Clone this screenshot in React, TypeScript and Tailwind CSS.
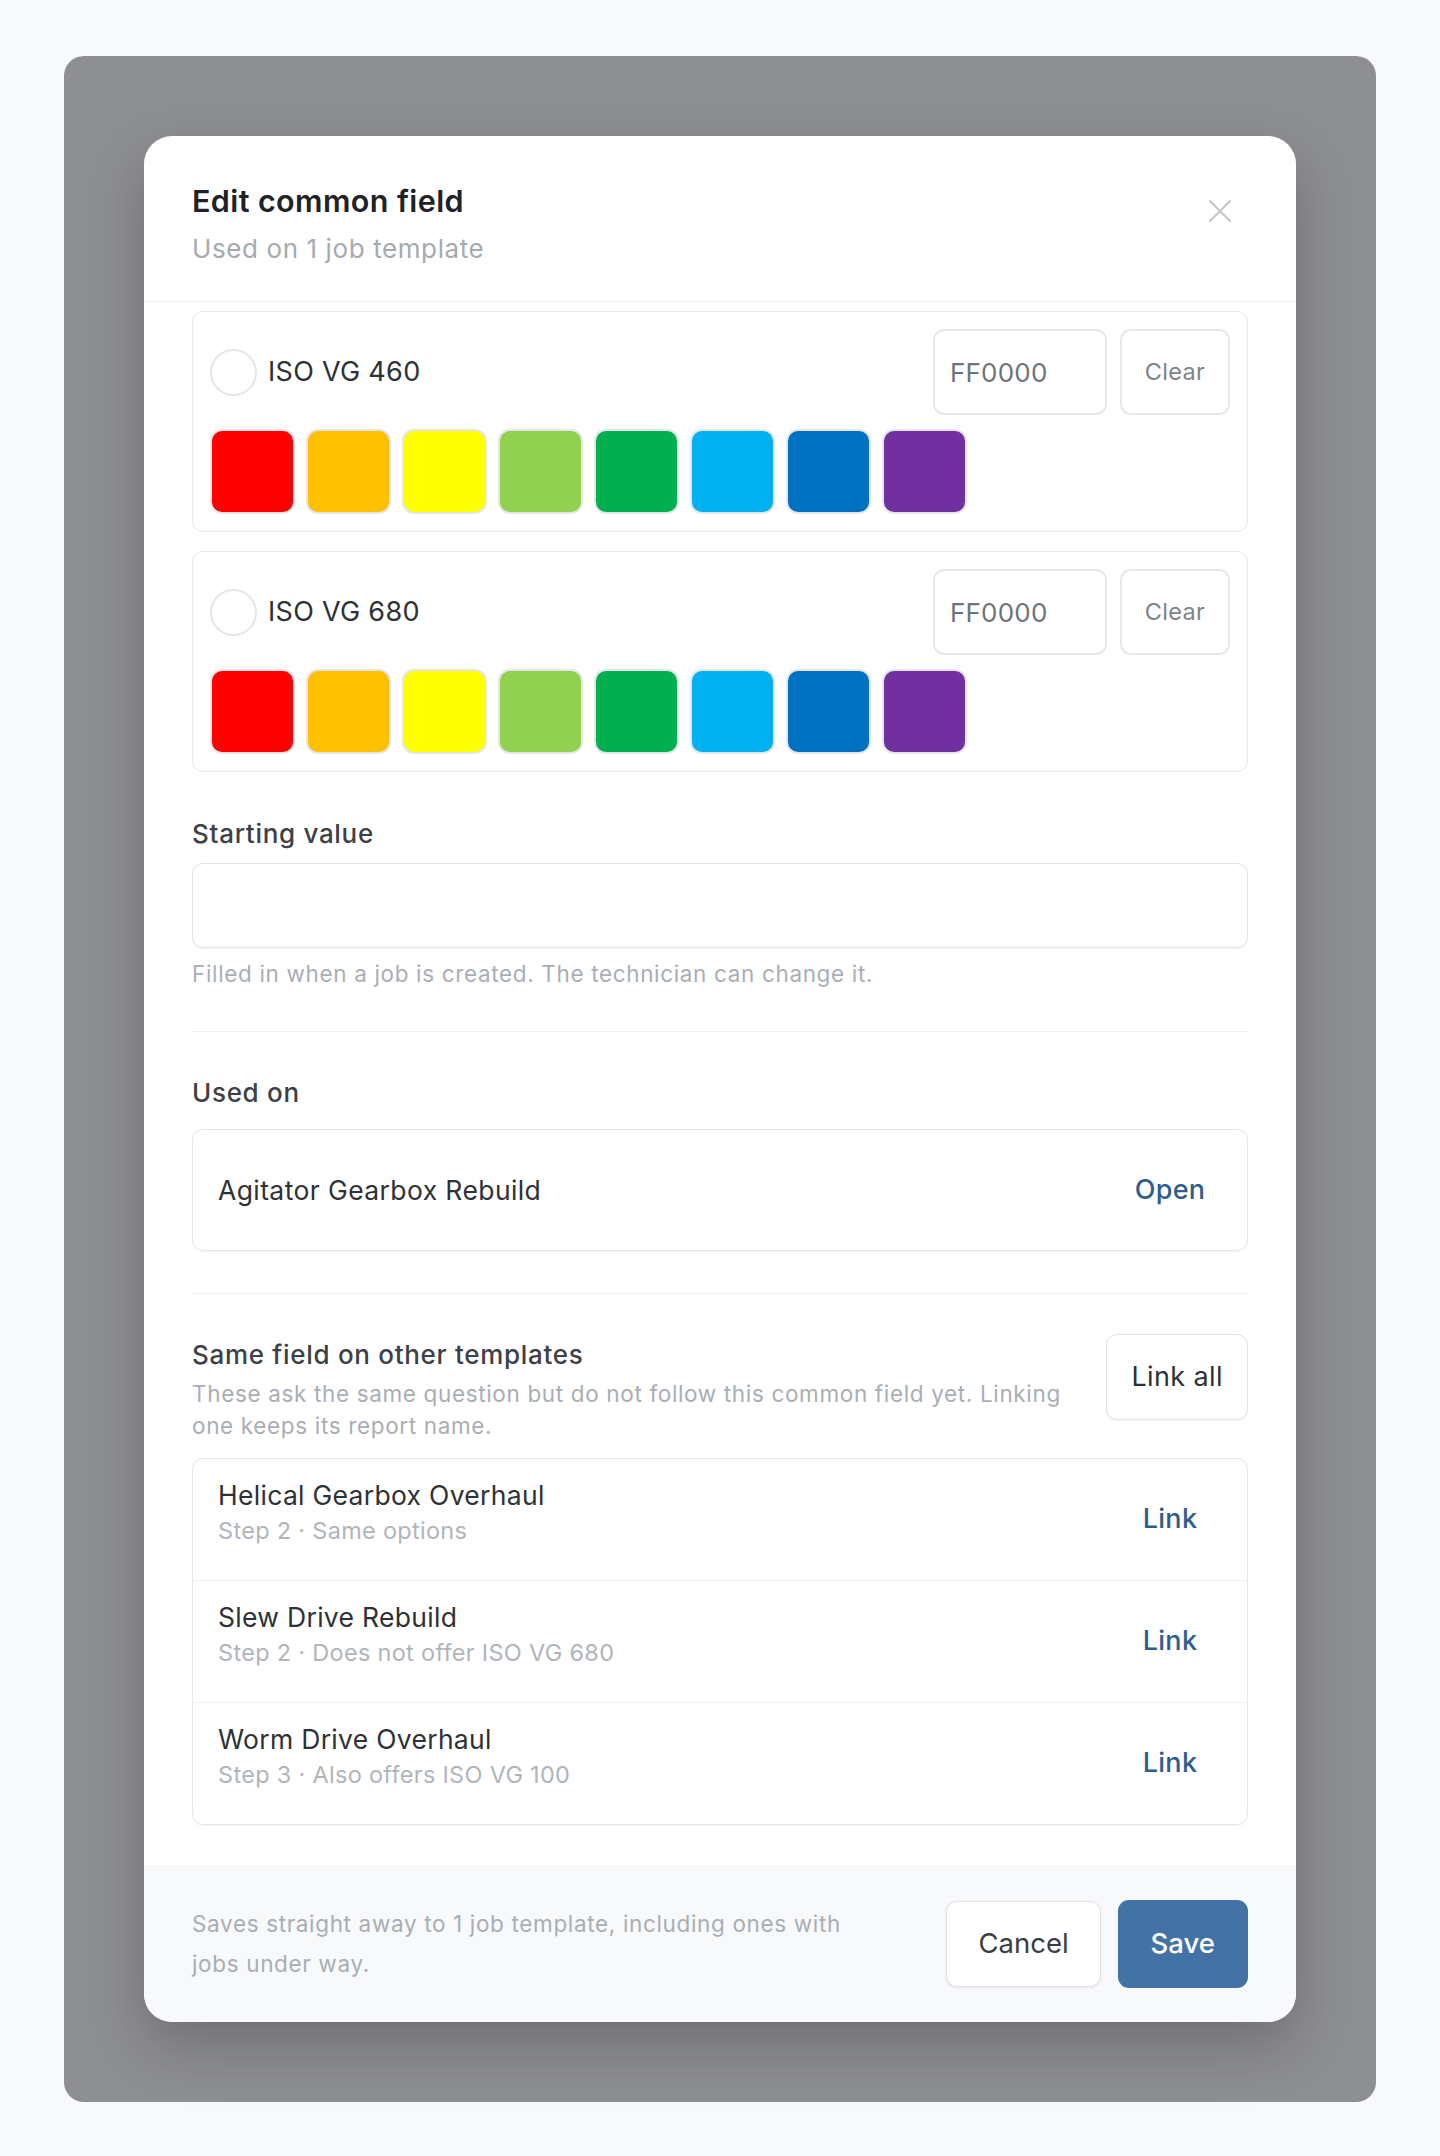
const swatches = ["#ff0000", "#ffc000", "#ffff00", "#92d050", "#00b050", "#00b0f0", "#0070c0", "#7030a0"];

const grades = [
  { label: "ISO VG 460", hex: "FF0000" },
  { label: "ISO VG 680", hex: "FF0000" },
];

const candidates = [
  { name: "Helical Gearbox Overhaul", note: "Step 2 · Same options" },
  { name: "Slew Drive Rebuild", note: "Step 2 · Does not offer ISO VG 680" },
  { name: "Worm Drive Overhaul", note: "Step 3 · Also offers ISO VG 100" },
];

export default function App() {
  return (
    <div className="min-h-screen bg-[#f8f9fb] px-16 py-14 [font-family:Inter,sans-serif]">
      <div className="rounded-[20px] bg-[#8e8f93] p-20">
        <div className="overflow-hidden rounded-[28px] bg-white shadow-[0_24px_60px_rgba(0,0,0,0.22)]">
          <header className="flex items-start justify-between border-b border-[#eef0f2] px-12 pt-[47px] pb-[34px]">
            <div>
              <h2 className="text-[30.5px] font-semibold leading-[36px] tracking-[0.4px] text-[#1f2226]">Edit common field</h2>
              <p className="mt-3 text-[26px] leading-[36px] tracking-[0.6px] text-[#a5aab0]">Used on 1 job template</p>
            </div>
            <button className="flex size-14 items-center justify-center" type="button" aria-label="Close">
              <svg width="24" height="24" viewBox="0 0 24 24" fill="none" stroke="#c4c8cd" strokeWidth="2.2" strokeLinecap="round">
                <path d="M2 2l20 20M22 2 2 22" />
              </svg>
            </button>
          </header>

          <div className="px-12 pt-[9px] pb-[41px]">
            <div className="flex flex-col gap-[19px]">
              {grades.map((grade) => (
                <GradeCard key={grade.label} hex={grade.hex} label={grade.label} />
              ))}
            </div>

            <label className="mt-[44px] block text-[26px] font-medium leading-[36px] tracking-[0.7px] text-[#3d4147]">Starting value</label>
            <div className="mt-[11px] h-[85px] rounded-[11px] border border-[#dfe2e6] bg-white shadow-[0_1px_2px_rgba(0,0,0,0.05)]" />
            <p className="mt-[10px] text-[22.5px] leading-[32px] tracking-[0.65px] text-[#a9aeb4]">Filled in when a job is created. The technician can change it.</p>

            <div className="mt-[41px] h-px bg-[#eef0f2]" />

            <h3 className="mt-[43px] text-[26px] font-medium leading-[36px] tracking-[0.7px] text-[#3d4147]">Used on</h3>
            <div className="mt-[18px] flex items-center justify-between rounded-[11px] border border-[#e4e7ea] py-[17px] pl-[25px] pr-[28px] shadow-[0_1px_2px_rgba(0,0,0,0.04)]">
              <span className="text-[26.5px] leading-[36px] tracking-[0.4px] text-[#2e3136]">Agitator Gearbox Rebuild</span>
              <button className="h-[86px] w-[98px] text-center text-[27px] font-medium tracking-[0.3px] text-[#2f5e8c]" type="button">Open</button>
            </div>

            <div className="mt-[42px] h-px bg-[#eef0f2]" />

            <div className="mt-[40px] flex items-start gap-[40px]">
              <div className="flex-1 pt-[3px]">
                <h3 className="text-[26px] font-medium leading-[36px] tracking-[0.7px] text-[#3d4147]">Same field on other templates</h3>
                <p className="mt-[5px] text-[22.5px] leading-[32px] tracking-[0.65px] text-[#a9aeb4]">
                  These ask the same question but do not follow this common field yet. Linking one keeps its report name.
                </p>
              </div>
              <button className="h-[86px] rounded-[11px] border border-[#dfe2e6] bg-white px-[24px] text-[27px] tracking-[0.4px] text-[#2e3136] shadow-[0_1px_2px_rgba(0,0,0,0.06)]" type="button">
                Link all
              </button>
            </div>

            <div className="mt-4 divide-y divide-[#eef0f2] rounded-[11px] border border-[#e4e7ea] shadow-[0_1px_2px_rgba(0,0,0,0.04)]">
              {candidates.map((item) => (
                <div className="flex items-start justify-between pt-[17px] pb-[18px] pl-[25px] pr-[28px]" key={item.name}>
                  <div>
                    <p className="text-[26.5px] leading-[38.5px] tracking-[0.3px] text-[#2e3136]">{item.name}</p>
                    <p className="text-[23.5px] leading-[32px] tracking-[0.3px] text-[#b0b5bb]">{item.note}</p>
                  </div>
                  <button className="h-[86px] w-[98px] text-center text-[27px] font-medium tracking-[0.3px] text-[#2f5e8c]" type="button">Link</button>
                </div>
              ))}
            </div>
          </div>

          <footer className="flex items-center justify-between border-t border-[#eef0f2] bg-[#f8f9fb] px-12 pt-[33px] pb-[34px]">
            <p className="max-w-[680px] text-[22.5px] leading-[40px] tracking-[0.65px] text-[#a9aeb4]">
              Saves straight away to 1 job template, including ones with jobs under way.
            </p>
            <div className="flex items-center gap-[17px]">
              <button className="h-[86px] rounded-[11px] border border-[#dfe2e6] bg-white px-[31px] text-[27.5px] text-[#3a3d42] shadow-[0_1px_3px_rgba(0,0,0,0.08)]" type="button">
                Cancel
              </button>
              <button className="h-[88px] rounded-[11px] bg-[#4373a4] px-[33px] text-[27.5px] font-medium text-white" type="button">
                Save
              </button>
            </div>
          </footer>
        </div>
      </div>
    </div>
  );
}

function GradeCard({ hex, label }: Readonly<{ hex: string; label: string }>) {
  return (
    <div className="rounded-[11px] border border-[#e6e8eb] p-[17px]">
      <div className="flex items-center justify-between">
        <div className="flex items-center gap-[11px]">
          <span className="size-[47px] rounded-full border-2 border-[#e3e5e8]" />
          <span className="text-[27px] tracking-[0.3px] text-[#2e3136]">{label}</span>
        </div>
        <div className="flex items-center gap-[13px]">
          <div className="flex h-[86px] w-[174px] items-center rounded-[11px] border-2 border-[#e6e8eb] px-[15px] text-[26px] tracking-[0.2px] text-[#6e737a]">{hex}</div>
          <button className="h-[86px] w-[110px] rounded-[11px] border-2 border-[#e6e8eb] text-[23.5px] tracking-[0.3px] text-[#7d838a]" type="button">
            Clear
          </button>
        </div>
      </div>
      <div className="mt-[14px] flex gap-[11px]">
        {swatches.map((color) => (
          <span className="size-[85px] rounded-[12px] border-2 border-[#e4e6e9]" key={color} style={{ backgroundColor: color }} />
        ))}
      </div>
    </div>
  );
}
